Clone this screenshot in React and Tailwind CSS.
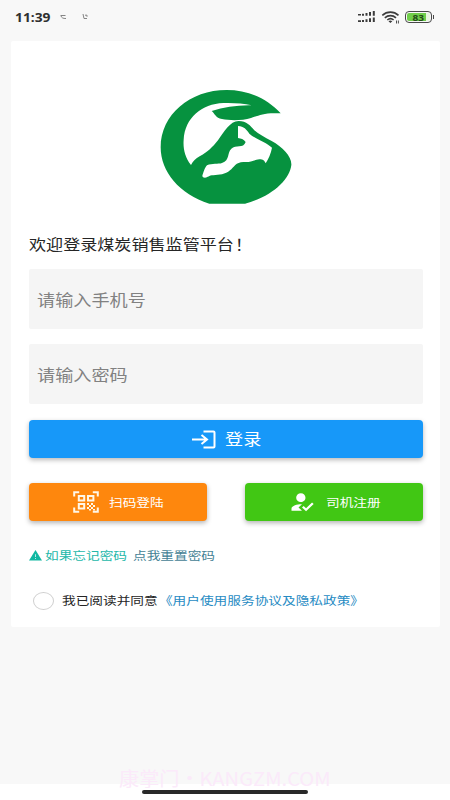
import React from "react";
import { MdHowToReg } from "react-icons/md";

function Wide({ className = "", children }) {
  return (
    <span className={"block origin-left scale-x-[1.17] whitespace-nowrap " + className}>
      {children}
    </span>
  );
}

function StatusBar() {
  return (
    <header className="flex h-[41px] items-start pl-[15px] pr-[16px] pt-[8px] text-[#2f2f2f]">
      <span className="block w-[43px] shrink-0">
        <span className="block origin-left scale-x-[1.06] whitespace-nowrap font-['Noto_Sans'] text-[13px] font-bold leading-[18px]">11:39</span>
      </span>
      <svg className="mt-[5px] h-[8px] w-[31px]" viewBox="0 0 31 8" fill="none" stroke="#858585" strokeWidth="1">
        <path d="M2.500 2.500h5M3 3c.8 2 2 2.500 5 2.500M25 1l1 4.500h3M27 2.200h2v1.600" />
      </svg>
      <div className="ml-auto flex h-[18px] items-center">
        <svg className="h-[12px] w-[18px]" viewBox="0 0 18 12" fill="#3c3c3c">
          <path d="M0 3h3v1.600H0zM4 2.800h2v1.900H4zM7.500 2h2v2.700h-2zM11 1h2v3.700h-2zM14.800 0h2v4.700h-2zM0 9.300h3v1.600H0zM4 8.900h2v2H4zM7.500 8.200h2v2.800h-2zM11 7.200h2V11h-2zM14.800 6.400h2v4.600h-2z" />
        </svg>
        <svg className="ml-[5px] h-[13px] w-[20px]" viewBox="0 0 20 13" fill="none" stroke="#3c3c3c" strokeWidth="1.6">
          <path d="M1.300 4.300C6 .1 12.800.1 17.500 4.300M3.800 6.800c3.400-2.900 8-2.900 11.200 0M6.300 9c2.100-1.700 4.300-1.700 6.300 0" />
          <path d="M7.500 10.200l1.900 1.800 1.900-1.800c-1.200-.9-2.600-.9-3.800 0z" fill="#3c3c3c" stroke="none" />
          <path d="M15.500 9.500v3M17.400 9.500v3" strokeWidth="0.9" />
        </svg>
        <div className="ml-[4px] flex h-[12px] w-[27px] items-center rounded-[4px] border-[1.5px] border-[#484848] p-[1px]">
          <div className="flex h-full w-full items-center justify-center rounded-[2px] bg-[linear-gradient(90deg,#70ce4a_83%,#e7f5df_83%)] font-['Noto_Sans'] text-[9px] font-bold leading-none text-[#244b18]">
            <span className="scale-x-[1.12]">83</span>
          </div>
        </div>
        <i className="ml-px h-[4px] w-[1.5px] bg-[#484848]" />
      </div>
    </header>
  );
}

function Logo() {
  return (
    <svg className="ml-[121px] h-[135px] w-[150px]" viewBox="0 0 450 405">
      <path
        fill="#06923f"
        d="M392 100C350 54 292 30 230 30C120 30 32 104 32 202C32 275 88 343 178 371H285C365 350 419 300 424 255C426 230 398 201 365 183C343 171 326 163 313 151C301 137 290 123 266 123C240 123 222 156 204 181C187 202 172 217 149 229C137 236 129 244 123 255C104 230 99 205 101 179C105 113 155 72 220 69C250 68 279 70 305 76C262 75 222 82 185 93C195 101 196 114 216 117C240 122 277 122 303 114C328 106 341 97 392 100Z"
      />
      <path
        fill="#fff"
        d="M264 138C282 139 289 148 298 161C311 174 348 186 366 203C363 221 355 237 347 250C343 242 340 238 328 238C309 241 299 248 282 246C258 245 252 262 240 271C226 285 207 283 190 286C176 286 174 293 165 293C160 292 157 291 157 287C160 280 164 262 171 256C187 249 204 253 216 249C241 240 230 219 244 206C257 193 280 207 287 186C281 178 273 175 264 174Z"
      />
    </svg>
  );
}

function LoginIcon() {
  return (
    <svg className="mr-[10px] h-[19px] w-[24px]" viewBox="0 0 24 19" fill="none" stroke="white" strokeWidth="2">
      <path d="M11.500 1.500h10c.7 0 1 .3 1 1v14c0 .7-.3 1-1 1h-10M0 9.500h14M9.500 5l5.500 4.500L9.500 14" />
    </svg>
  );
}

function QrIcon() {
  return (
    <svg className="h-[22px] w-[26px]" viewBox="0 0 26 22" fill="none" stroke="#fff7e8" strokeWidth="2">
      <path d="M1.200 5.500V1.200h5M19.800 1.200h5v4.300M1.200 16.500v4.300h5M19.800 20.800h5v-4.300M5.800 4.900h5.400v4.600H5.800zM15 4.900h5.400v4.600H15zM5.800 13h5.400v4.600H5.800z" />
      <path fill="#fff7e8" stroke="none" d="M14 12h2v2h-2zM18 12h2v2h-2zM16 14h2v2h-2zM20 14h2v2h-2zM14 16h2v2h-2zM18 16h2v2h-2zM16 18h2v1.500h-2zM20 18h2v1.500h-2z" />
    </svg>
  );
}

function WarningIcon() {
  return (
    <svg className="h-[11px] w-[13px]" viewBox="0 0 13 11">
      <path fill="#10b8a2" d="M6.500 0L13 10.500H0z" />
      <path fill="#fff" fillOpacity=".7" d="M6 4.200h1v2.800H6zM6 8h1v1.100H6z" />
    </svg>
  );
}

function Field({ type, placeholder, className }) {
  return (
    <div className={"w-[394px] overflow-hidden rounded-[2px] bg-[#f5f5f5] pl-[8px] " + className}>
      <input
        type={type}
        placeholder={placeholder}
        className="block h-[59px] w-[320px] origin-left scale-x-[1.17] bg-transparent text-[15.5px] outline-none placeholder:text-[#818181]"
      />
    </div>
  );
}

export default function App() {
  return (
    <div className="flex h-[800px] w-[450px] flex-col overflow-hidden bg-[#f8f8f8] font-['Noto_Sans_CJK_SC',sans-serif]">
      <StatusBar />
      <main className="ml-[11px] h-[586px] w-[429px] shrink-0 rounded-[2px] bg-white px-[18px] pt-[39px]">
        <Logo />
        <h1 className="mt-[17px] h-[24px] text-[14.6px] leading-[24px] text-[#252525]">
          <Wide>欢迎登录煤炭销售监管平台<span className="ml-[1px]">！</span></Wide>
        </h1>
        <Field type="text" placeholder="请输入手机号" className="mt-[13px] h-[60px]" />
        <Field type="password" placeholder="请输入密码" className="mt-[15px] h-[60px]" />
        <button className="mt-[16px] flex h-[38px] w-[394px] items-center rounded-[4px] bg-[#1798f9] pl-[163px] text-white shadow-[0_2px_5px_rgba(0,0,0,0.28)]">
          <LoginIcon />
          <Wide className="-ml-px text-[15.5px]">登录</Wide>
        </button>
        <div className="mt-[25px] flex w-[394px] justify-between text-[11.7px] text-white">
          <button className="flex h-[38px] w-[178px] items-center rounded-[4px] bg-[#fe870d] pl-[44px] shadow-[0_2px_5px_rgba(0,0,0,0.3)]">
            <QrIcon />
            <Wide className="ml-[10px]">扫码登陆</Wide>
          </button>
          <button className="flex h-[38px] w-[178px] items-center rounded-[4px] bg-[#41c714] pl-[43px] shadow-[0_2px_5px_rgba(0,0,0,0.3)]">
            <MdHowToReg className="h-[26px] w-[28px]" preserveAspectRatio="none" />
            <Wide className="ml-[10px]">司机注册</Wide>
          </button>
        </div>
        <div className="mt-[24px] flex h-[20px] items-center text-[11.7px] leading-[20px]">
          <WarningIcon />
          <div className="ml-[3px] w-[88px]"><Wide className="text-[#25b8aa]">如果忘记密码</Wide></div>
          <Wide className="text-[#448295]">点我重置密码</Wide>
        </div>
        <label className="mt-[26px] flex h-[20px] items-center pl-[4px] text-[11.7px] leading-[20px]">
          <input type="checkbox" className="h-[18px] w-[21px] appearance-none rounded-[50%] border border-[#cfcfcf] bg-white" />
          <span className="-mt-[3px] ml-[8px] block">
            <Wide className="text-[#252525]">我已阅读并同意<span className="ml-[1px] text-[#278bc3]">《用户使用服务协议及隐私政策》</span></Wide>
          </span>
        </label>
      </main>
      <footer className="relative mt-auto flex h-[16px] shrink-0 justify-center bg-white pt-[6px]">
        <span className="absolute left-[119px] top-[-18px] origin-left scale-x-[1.06] whitespace-nowrap text-[19px] leading-[24px] text-[#fbeafa]">康掌门・KANGZM.COM</span>
        <div className="relative h-[4px] w-[166px] rounded-full bg-[#292929]" />
      </footer>
    </div>
  );
}
